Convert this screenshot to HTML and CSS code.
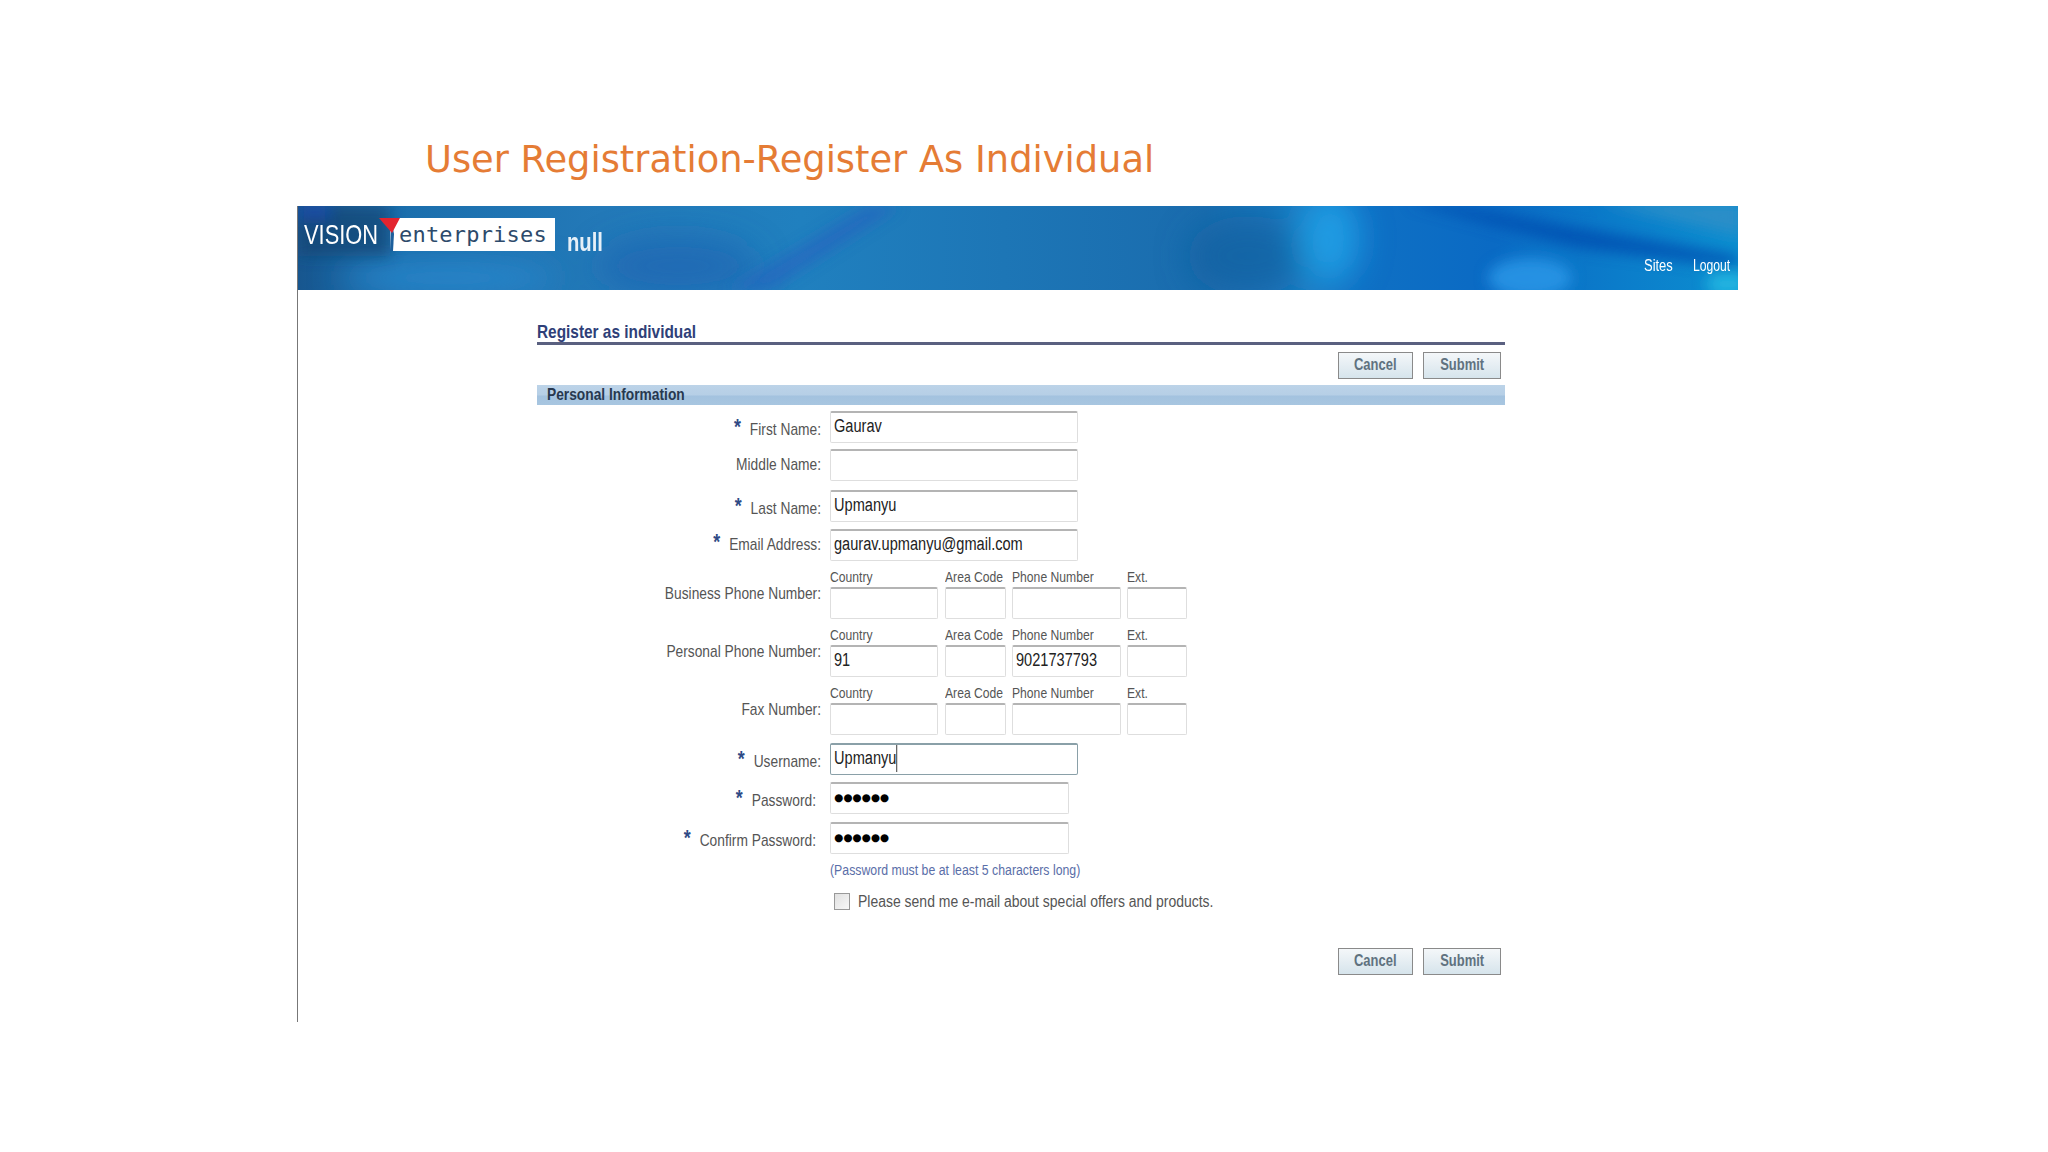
FILE: index.html
```html
<!DOCTYPE html>
<html lang="en">
<head>
    <meta charset="UTF-8">
    <title>User Registration-Register As Individual</title>
    <link rel="stylesheet" href="styles.css">
</head>
<body>
    <h1 class="slide-title">User Registration-Register As Individual</h1>

    <div class="screen">
        <div class="banner">
            <svg class="banner-art" width="1440" height="84" viewBox="0 0 1440 84" preserveAspectRatio="none">
                <defs>
                    <linearGradient id="base">
                        <stop offset="0" stop-color="#17568f"/>
                        <stop offset=".07" stop-color="#1b6eac"/>
                        <stop offset=".21" stop-color="#2379b8"/>
                        <stop offset=".35" stop-color="#2080bf"/>
                        <stop offset=".49" stop-color="#1d76b6"/>
                        <stop offset=".63" stop-color="#1a6cae"/>
                        <stop offset=".70" stop-color="#1a7cc4"/>
                        <stop offset=".74" stop-color="#0f70c4"/>
                        <stop offset=".83" stop-color="#0a6ac4"/>
                        <stop offset="1" stop-color="#0c8ed0"/>
                    </linearGradient>
                    <filter id="soft" x="-30%" y="-60%" width="160%" height="220%"><feGaussianBlur stdDeviation="7"/></filter>
                    <filter id="softer" x="-30%" y="-60%" width="160%" height="220%"><feGaussianBlur stdDeviation="16"/></filter>
                </defs>
                <rect width="1440" height="84" fill="url(#base)"/>
                <g filter="url(#softer)">
                    <ellipse cx="150" cy="72" rx="110" ry="14" fill="#2a8ad0"/>
                    <ellipse cx="950" cy="50" rx="60" ry="40" fill="#135f9f" opacity=".7"/>
                    <ellipse cx="1032" cy="32" rx="30" ry="46" fill="#20a8ee" opacity=".75"/>
                    <ellipse cx="380" cy="60" rx="80" ry="30" fill="#2060b0" opacity=".6"/>
                </g>
                <g filter="url(#soft)">
                    <rect x="0" y="0" width="92" height="50" fill="#123f6c" opacity=".6"/>
                    <rect x="0" y="0" width="32" height="12" fill="#1c4aa8"/>
                    <polygon points="570,0 602,0 472,84 430,84" fill="#2a5fc0" opacity=".6"/>
                    <polygon points="1110,-4 1135,-4 1440,50 1440,62 1280,42" fill="#0050b0" opacity=".85"/>
                    <ellipse cx="1232" cy="72" rx="42" ry="20" fill="#2a96e8" opacity=".85"/>
                    <polygon points="1300,-4 1444,-4 1444,30" fill="#2a8ec8"/>
                    <ellipse cx="1430" cy="78" rx="22" ry="12" fill="#20b4e0"/>
                </g>
            </svg>
            <div class="logo">
                <span class="logo-vision">VISION</span>
                <span class="logo-box">enterprises</span>
                <svg class="logo-tick" width="22" height="33" viewBox="0 0 22 33">
                    <polygon points="12,0 15,16 14,33 11,33" fill="#1c5f9c"/>
                    <polygon points="0,0 21,0 13,15" fill="#e3242f"/>
                </svg>
            </div>
            <span class="logo-null"><span class="n">null</span></span>
            <div class="banner-links">
                <span class="link-sites"><span class="n">Sites</span></span>
                <span class="link-logout"><span class="n">Logout</span></span>
            </div>
        </div>

        <div class="form">
            <h2 class="form-title"><span class="n">Register as individual</span></h2>
            <div class="buttons">
                <span class="btn btn-cancel"><span class="n center">Cancel</span></span>
                <span class="btn btn-submit"><span class="n center">Submit</span></span>
            </div>
            <div class="section-bar"><span class="n">Personal Information</span></div>

            <div class="row row-first">
                <div class="label low"><span class="req">*</span>First Name:</div>
                <div class="input wide"><span class="n">Gaurav</span></div>
            </div>
            <div class="row row-middle">
                <div class="label">Middle Name:</div>
                <div class="input wide"></div>
            </div>
            <div class="row row-b">
                <div class="label low"><span class="req">*</span>Last Name:</div>
                <div class="input wide"><span class="n">Upmanyu</span></div>
            </div>
            <div class="row row-a">
                <div class="label"><span class="req">*</span>Email Address:</div>
                <div class="input wide"><span class="n">gaurav.upmanyu@gmail.com</span></div>
            </div>

            <div class="row row-phone">
                <div class="label">Business Phone Number:</div>
                <div class="phone">
                    <div class="cell c-country"><span class="cap n">Country</span><div class="input"></div></div>
                    <div class="cell c-area"><span class="cap n">Area Code</span><div class="input"></div></div>
                    <div class="cell c-number"><span class="cap n">Phone Number</span><div class="input"></div></div>
                    <div class="cell c-ext"><span class="cap n">Ext.</span><div class="input"></div></div>
                </div>
            </div>
            <div class="row row-phone">
                <div class="label">Personal Phone Number:</div>
                <div class="phone">
                    <div class="cell c-country"><span class="cap n">Country</span><div class="input"><span class="n">91</span></div></div>
                    <div class="cell c-area"><span class="cap n">Area Code</span><div class="input"></div></div>
                    <div class="cell c-number"><span class="cap n">Phone Number</span><div class="input"><span class="n">9021737793</span></div></div>
                    <div class="cell c-ext"><span class="cap n">Ext.</span><div class="input"></div></div>
                </div>
            </div>
            <div class="row row-phone">
                <div class="label">Fax Number:</div>
                <div class="phone">
                    <div class="cell c-country"><span class="cap n">Country</span><div class="input"></div></div>
                    <div class="cell c-area"><span class="cap n">Area Code</span><div class="input"></div></div>
                    <div class="cell c-number"><span class="cap n">Phone Number</span><div class="input"></div></div>
                    <div class="cell c-ext"><span class="cap n">Ext.</span><div class="input"></div></div>
                </div>
            </div>

            <div class="row row-user">
                <div class="label low"><span class="req">*</span>Username:</div>
                <div class="input wide focused"><span class="n caret">Upmanyu</span></div>
            </div>
            <div class="row row-a">
                <div class="label low pw"><span class="req">*</span>Password:</div>
                <div class="input mid dots">●●●●●●</div>
            </div>
            <div class="row row-confirm">
                <div class="label low pw"><span class="req">*</span>Confirm Password:</div>
                <div class="input mid dots">●●●●●●</div>
            </div>

            <div class="hint"><span class="n">(Password must be at least 5 characters long)</span></div>
            <div class="offers">
                <span class="checkbox"></span>
                <span class="n">Please send me e-mail about special offers and products.</span>
            </div>

            <div class="buttons buttons-bottom">
                <span class="btn btn-cancel"><span class="n center">Cancel</span></span>
                <span class="btn btn-submit"><span class="n center">Submit</span></span>
            </div>
        </div>
    </div>
</body>
</html>
```

FILE: styles.css
```css
body {
    margin: 0;
    background: #fff;
    font-family: "Liberation Sans", sans-serif;
    color: #555;
}
/* the screenshot inside the slide is squeezed sideways, so text is too */
.n {
    display: inline-block;
    white-space: nowrap;
    transform: scaleX(.81);
    transform-origin: left;
}
.center {
    transform-origin: center;
}
.slide-title {
    margin: 0 0 0 425px;
    padding-top: 135px;
    height: 206px;
    box-sizing: border-box;
    font-family: "DejaVu Sans", sans-serif;
    font-size: 36.8px;
    font-weight: normal;
    line-height: 50px;
    color: #e57c35;
}
.screen {
    margin-left: 297px;
    width: 1441px;
    height: 816px;
    box-sizing: border-box;
    border-left: 1px solid #777;
}
.banner {
    height: 84px;
    display: flex;
    align-items: flex-start;
    position: relative;
    overflow: hidden;
    background: #1b6eac;
}
.banner-art {
    position: absolute;
    left: 0;
    top: 0;
}
.logo {
    margin: 12px 0 0 6px;
    display: flex;
    align-items: center;
    position: relative;
}
.logo-vision {
    flex: none;
    width: 86px;
    font-size: 28px;
    color: #fff;
    white-space: nowrap;
    transform: scaleX(.78);
    transform-origin: left;
}
.logo-box {
    flex: none;
    width: 165px;
    height: 33px;
    background: #fff;
    box-sizing: border-box;
    padding-left: 9px;
    font-family: "DejaVu Sans Mono", monospace;
    font-size: 22px;
    letter-spacing: .2px;
    line-height: 33px;
    color: #2d4a6b;
}
.logo-tick {
    position: absolute;
    left: 75px;
    top: 0;
}
.logo-null {
    margin: 21px 0 0 12px;
    font-size: 25px;
    font-weight: bold;
    line-height: 30px;
    color: #e6f0f8;
    position: relative;
}
.banner-links {
    margin: auto 7px 15px auto;
    display: flex;
    gap: 21px;
    font-size: 16px;
    color: #fff;
    position: relative;
}
.link-sites { width: 28px; }
.link-logout { width: 38px; }
.link-logout .n { transform: scaleX(.76); }
.form {
    margin-left: 239px;
    width: 968px;
    font-size: 17px;
}
.form-title {
    margin: 0;
    padding-top: 31px;
    height: 55px;
    box-sizing: border-box;
    border-bottom: 3px solid #5a6080;
    font-size: 19px;
    line-height: 22px;
    color: #2f3f78;
}
.buttons {
    display: flex;
    justify-content: flex-end;
    gap: 10px;
    margin-top: 7px;
    padding-right: 4px;
}
.buttons-bottom {
    margin-top: 37px;
}
.btn {
    height: 27px;
    box-sizing: border-box;
    border: 1px solid #8a8a8a;
    background: linear-gradient(#f4f7f9, #d6e4ec);
    text-align: center;
    font-size: 16px;
    font-weight: bold;
    line-height: 24px;
    color: #60727f;
}
.btn-cancel {
    width: 75px;
}
.btn-submit {
    width: 78px;
}
.section-bar {
    margin-top: 6px;
    height: 20px;
    padding-left: 10px;
    background: linear-gradient(#bcd3e8 0, #b6cfe6 50%, #a3c2df 55%, #a8c6e0 100%);
    font-size: 17px;
    font-weight: bold;
    line-height: 20px;
    color: #27384f;
}
.row {
    display: flex;
    align-items: center;
}
.row-first { margin-top: 6px; }
.row-middle { margin-top: 6px; }
.row-a { margin-top: 7px; }
.row-b { margin-top: 9px; }
.row-user { margin-top: 8px; }
.row-confirm { margin-top: 8px; }
.row-phone { margin-top: 8px; align-items: flex-end; }
.label {
    width: 284px;
    margin-right: 9px;
    flex: none;
    text-align: right;
    white-space: nowrap;
    transform: scaleX(.81);
    transform-origin: right;
}
.row-phone .label {
    padding-bottom: 15px;
}
.low {
    padding-top: 5px;
}
.pw {
    width: 279px;
    margin-right: 14px;
}
.req {
    margin-right: 11px;
    font-size: 22px;
    font-weight: bold;
    line-height: 10px;
    vertical-align: 1px;
    color: #2f4a85;
}
.input {
    height: 32px;
    box-sizing: border-box;
    border: 1px solid #dedede;
    border-top: 2px solid #b4b4b4;
    border-radius: 2px;
    padding-left: 3px;
    background: #fff;
    font-size: 18px;
    line-height: 27px;
    color: #222;
}
.wide { width: 248px; }
.mid { width: 239px; }
.dots { font-family: "DejaVu Sans", sans-serif; font-size: 10.5px; color: #000; }
.focused { border-color: #8aa0a8; }
.caret { border-right: 1px solid #111; }
.phone {
    display: flex;
}
.cell {
    display: flex;
    flex-direction: column;
}
.cap {
    font-size: 15px;
    line-height: 16px;
    padding-bottom: 2px;
}
.c-country { width: 108px; margin-right: 7px; }
.c-area { width: 61px; margin-right: 6px; }
.c-number { width: 109px; margin-right: 6px; }
.c-ext { width: 60px; }
.hint {
    margin: 7px 0 0 293px;
    font-size: 15.2px;
    line-height: 18px;
    color: #5a6ea8;
}
.offers {
    margin: 12px 0 0 297px;
    display: flex;
    align-items: center;
    gap: 8px;
    font-size: 17.25px;
    line-height: 20px;
}
.checkbox {
    width: 14px;
    height: 15px;
    border: 1px solid #999;
    background: linear-gradient(135deg, #e0e0e0, #f8f8f8);
}
```
